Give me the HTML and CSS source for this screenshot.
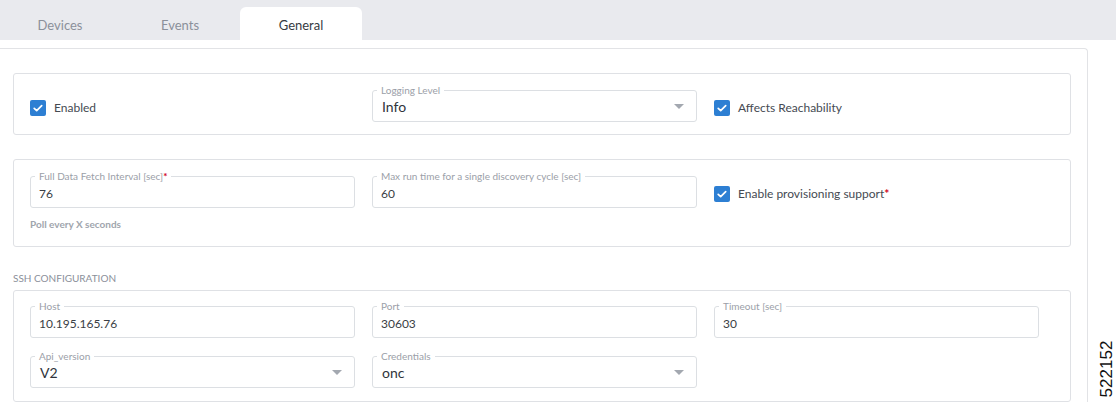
FILE: index.html
```html
<!DOCTYPE html>
<html>
<head>
<meta charset="utf-8">
<link rel="stylesheet" href="styles.css">
</head>
<body>
<div class="tabs">
  <div class="tab">Devices</div>
  <div class="tab">Events</div>
  <div class="tab active">General</div>
</div>
<div class="panel">
  <div class="card card-top">
    <div class="check"><span class="box"><svg viewBox="0 0 16 16"><path d="M4.2 8.3l2.5 2.4 5-5" /></svg></span><span class="check-label">Enabled</span></div>
    <div class="field select"><span class="legend">Logging Level</span><span class="value">Info</span><span class="arrow"></span></div>
    <div class="check"><span class="box"><svg viewBox="0 0 16 16"><path d="M4.2 8.3l2.5 2.4 5-5" /></svg></span><span class="check-label">Affects Reachability</span></div>
  </div>

  <div class="card card-mid">
    <div class="cell">
      <div class="field"><span class="legend">Full Data Fetch Interval [sec]<b class="req">*</b></span><span class="value small">76</span></div>
      <div class="hint">Poll every X seconds</div>
    </div>
    <div class="field"><span class="legend">Max run time for a single discovery cycle [sec]</span><span class="value small">60</span></div>
    <div class="check"><span class="box"><svg viewBox="0 0 16 16"><path d="M4.2 8.3l2.5 2.4 5-5" /></svg></span><span class="check-label">Enable provisioning support<b class="req">*</b></span></div>
  </div>

  <div class="section-title">SSH CONFIGURATION</div>
  <div class="card card-ssh">
    <div class="field"><span class="legend">Host</span><span class="value small">10.195.165.76</span></div>
    <div class="field"><span class="legend">Port</span><span class="value small">30603</span></div>
    <div class="field"><span class="legend">Timeout [sec]</span><span class="value small">30</span></div>
    <div class="field select"><span class="legend">Api_version</span><span class="value">V2</span><span class="arrow"></span></div>
    <div class="field select"><span class="legend">Credentials</span><span class="value">onc</span><span class="arrow"></span></div>
  </div>
</div>
<div class="figno">522152</div>
</body>
</html>
```
FILE: styles.css
```css
html, body {
  margin: 0;
  padding: 0;
  background: #ffffff;
  overflow: hidden;
}
body {
  width: 1116px;
  height: 402px;
  position: relative;
  font-family: Lato, "Open Sans", sans-serif;
  color: #454a52;
}
.tabs {
  height: 40px;
  background: #e9eaee;
  display: flex;
  align-items: flex-end;
  box-sizing: border-box;
  padding-top: 7px;
}
.tab {
  width: 120px;
  height: 33px;
  display: flex;
  align-items: center;
  justify-content: center;
  font-size: 13px;
  color: #8b909a;
  padding-top: 3px;
  box-sizing: border-box;
}
.tab.active {
  width: 122px;
  background: #ffffff;
  color: #353a42;
  border-radius: 6px 6px 0 0;
}
.panel {
  margin-top: 8px;
  width: 1088px;
  box-sizing: border-box;
  border-top: 1px solid #e2e3e6;
  border-right: 1px solid #e2e3e6;
  border-top-right-radius: 4px;
  padding: 24px 16px 0 13px;
  height: 354px;
}
.card {
  border: 1px solid #dfe1e5;
  border-radius: 3px;
  display: grid;
  grid-template-columns: 325px 325px 325px;
  column-gap: 17px;
  row-gap: 16px;
  padding: 15px 16px 12px 16px;
  align-items: start;
}
.card-top {
  height: 62px;
  box-sizing: border-box;
  align-items: center;
}
.card-mid {
  margin-top: 24px;
  height: 88px;
  box-sizing: border-box;
  padding-top: 16px;
}
.card-ssh {
  height: 112px;
  box-sizing: border-box;
}
.section-title {
  margin-top: 25px;
  margin-bottom: 5px;
  font-size: 10px;
  line-height: 13px;
  color: #8b909a;
}
.field {
  position: relative;
  height: 32px;
  box-sizing: border-box;
  border: 1px solid #dcdfe3;
  border-radius: 3px;
  display: flex;
  align-items: center;
  padding: 2px 9px 0 8px;
}
.legend {
  position: absolute;
  top: -7px;
  left: 4px;
  padding: 0 4px;
  background: #ffffff;
  font-size: 10px;
  line-height: 12px;
  color: #9ba0a8;
  white-space: nowrap;
}
.req {
  color: #d0021b;
  font-weight: 700;
}
.value {
  font-size: 14px;
  color: #30343b;
}
.value.small {
  font-size: 12px;
  color: #3a3e45;
}
.select .value {
  padding-left: 1px;
}
.arrow {
  margin-left: auto;
  width: 0;
  height: 0;
  border-left: 5px solid transparent;
  border-right: 5px solid transparent;
  border-top: 5px solid #a3a8b0;
  margin-right: 3px;
}
.check {
  display: flex;
  align-items: center;
  height: 32px;
  padding-top: 3px;
  box-sizing: border-box;
}
.card-top .check {
  padding-top: 4px;
}
.box {
  width: 16px;
  height: 16px;
  background: #2d7fd3;
  border-radius: 2px;
  display: inline-flex;
  margin-right: 8px;
  flex-shrink: 0;
}
.box svg {
  width: 16px;
  height: 16px;
  fill: none;
  stroke: #ffffff;
  stroke-width: 1.7;
  stroke-linecap: round;
  stroke-linejoin: round;
}
.check-label {
  font-size: 12px;
  color: #454a52;
}
.cell {
  display: flex;
  flex-direction: column;
}
.hint {
  margin-top: 10px;
  font-size: 10px;
  font-weight: 700;
  color: #a0a5ad;
}
.figno {
  position: absolute;
  left: 1077px;
  top: 359px;
  transform: rotate(-90deg);
  font-family: "Liberation Sans", Arial, sans-serif;
  font-size: 17px;
  color: #111111;
  width: 60px;
  text-align: center;
}
```
